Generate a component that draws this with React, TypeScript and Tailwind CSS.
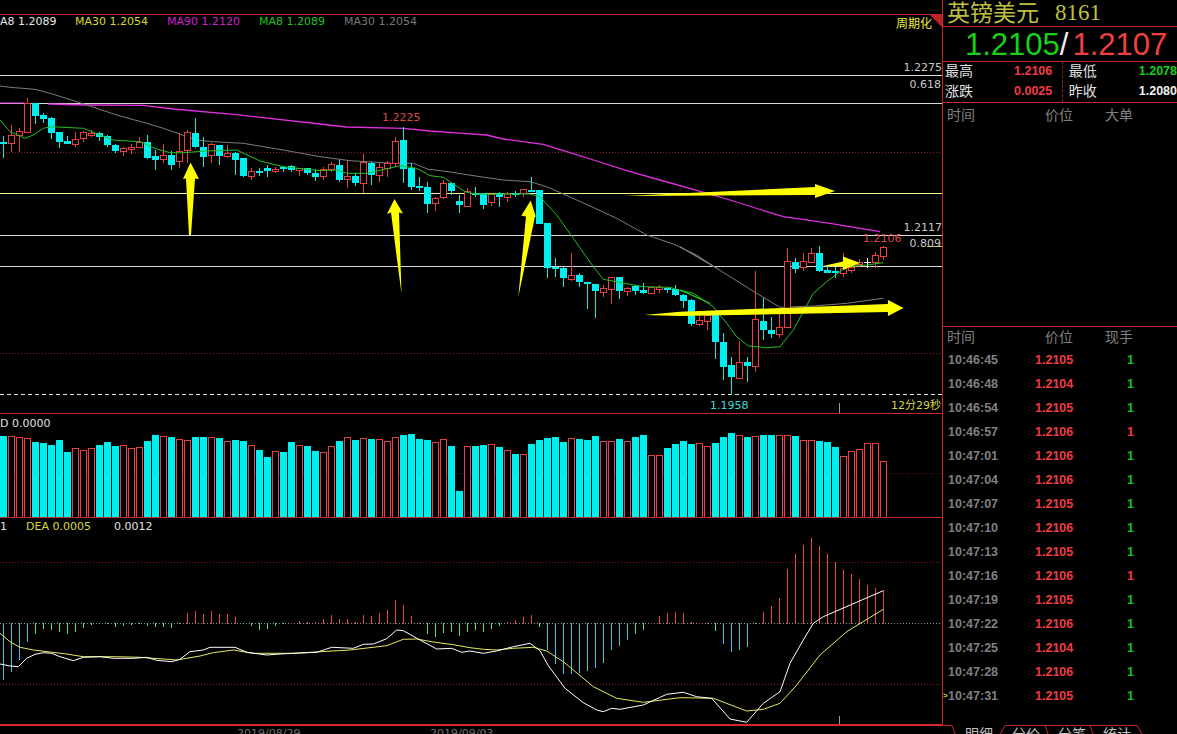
import React from "react";

const CYAN = "#00f0f0";
const RED = "#e8403c";
const LINE = "#c02830";
const WIDTH = 942;

// [wick top, body top, body bottom, wick bottom, colour], y values are 3x page pixels
type Candle = [number, number, number, number, "c" | "r" | "w"];
const candles: Candle[] = [
  [408, 425, 429, 475, "c"], [375, 406, 428, 455, "r"], [385, 392, 406, 455, "r"], [295, 310, 396, 400, "r"],
  [310, 310, 347, 372, "c"], [338, 346, 356, 368, "c"], [350, 354, 398, 418, "c"], [395, 396, 426, 443, "c"],
  [408, 423, 432, 432, "c"], [395, 418, 431, 440, "r"], [392, 397, 413, 425, "r"], [390, 400, 403, 412, "r"],
  [395, 400, 410, 422, "c"], [405, 408, 435, 440, "c"], [432, 435, 453, 458, "c"], [442, 443, 452, 467, "r"],
  [432, 440, 446, 462, "r"], [412, 426, 440, 445, "r"], [405, 426, 473, 478, "c"], [450, 469, 480, 510, "c"],
  [432, 465, 477, 490, "r"], [452, 466, 495, 510, "c"], [398, 452, 482, 503, "r"], [390, 397, 450, 488, "r"],
  [355, 399, 440, 443, "c"], [412, 441, 470, 500, "c"], [430, 433, 466, 490, "r"], [435, 436, 467, 495, "c"],
  [435, 460, 467, 473, "r"], [455, 460, 479, 525, "c"], [473, 474, 527, 530, "c"], [505, 514, 527, 540, "r"],
  [505, 513, 518, 527, "c"], [495, 504, 513, 530, "c"], [500, 506, 512, 520, "r"], [497, 502, 508, 515, "c"],
  [495, 498, 511, 515, "c"], [503, 505, 510, 527, "r"], [503, 505, 520, 525, "c"], [508, 520, 530, 542, "c"],
  [500, 508, 529, 540, "r"], [485, 493, 507, 515, "r"], [480, 496, 540, 545, "c"], [482, 527, 538, 563, "r"],
  [518, 528, 550, 558, "c"], [462, 485, 548, 578, "r"], [485, 489, 526, 556, "c"], [488, 501, 526, 545, "r"],
  [483, 489, 505, 530, "r"], [410, 424, 490, 500, "r"], [380, 421, 506, 548, "c"], [488, 505, 560, 570, "c"],
  [530, 558, 565, 572, "c"], [545, 562, 611, 640, "c"], [590, 595, 608, 632, "r"], [540, 548, 592, 597, "r"],
  [548, 550, 572, 585, "c"], [585, 603, 615, 640, "c"], [565, 573, 618, 622, "r"], [562, 578, 582, 590, "c"],
  [578, 580, 615, 627, "c"], [578, 582, 607, 618, "r"], [575, 578, 590, 620, "c"], [575, 578, 592, 605, "r"],
  [572, 578, 582, 592, "c"], [568, 568, 580, 590, "r"], [532, 570, 575, 575, "c"], [570, 570, 672, 673, "c"],
  [670, 670, 805, 833, "c"], [775, 800, 807, 830, "c"], [800, 805, 835, 860, "c"], [758, 826, 836, 842, "r"],
  [820, 825, 845, 860, "c"], [845, 846, 851, 927, "c"], [853, 853, 872, 955, "c"], [855, 865, 875, 890, "r"],
  [830, 830, 866, 912, "r"], [832, 832, 872, 898, "c"], [860, 863, 872, 888, "r"], [855, 857, 872, 885, "c"],
  [848, 870, 878, 882, "c"], [860, 861, 878, 878, "r"], [855, 860, 862, 880, "r"], [860, 863, 868, 880, "c"],
  [855, 866, 885, 888, "c"], [883, 884, 902, 925, "c"], [898, 900, 972, 978, "c"], [948, 960, 972, 978, "r"],
  [940, 945, 962, 990, "r"], [940, 940, 1025, 1077, "c"], [1000, 1027, 1100, 1140, "c"], [1070, 1095, 1130, 1185, "c"],
  [1023, 1085, 1133, 1137, "r"], [1070, 1087, 1097, 1147, "c"], [813, 958, 1097, 1115, "r"], [895, 963, 990, 1020, "c"],
  [950, 990, 1002, 1015, "c"], [940, 980, 1003, 1015, "r"], [745, 782, 982, 983, "r"], [773, 787, 807, 820, "c"],
  [760, 782, 802, 813, "r"], [745, 760, 785, 785, "r"], [738, 760, 813, 815, "c"], [795, 810, 818, 820, "c"],
  [800, 813, 818, 835, "c"], [758, 805, 820, 830, "r"], [795, 800, 810, 820, "r"], [778, 785, 788, 800, "r"],
  [775, 787, 788, 805, "w"], [755, 766, 786, 805, "r"], [738, 740, 767, 780, "r"],
];

// volume bar tops, 3x pixels below y=410
const volTops = [
  78, 78, 82, 85, 96, 99, 105, 90, 126, 115, 120, 115, 105, 96, 108, 105, 115, 111, 93, 75, 78, 82, 87, 90, 82, 82, 82, 85,
  93, 90, 93, 105, 120, 141, 123, 126, 96, 105, 108, 123, 126, 108, 93, 82, 90, 85, 87, 87, 93, 82, 75, 72, 87, 90, 96, 87,
  108, 243, 108, 108, 105, 102, 111, 120, 132, 132, 102, 90, 84, 81, 96, 85, 87, 90, 78, 93, 93, 87, 93, 81, 75, 135, 135,
  114, 102, 93, 102, 99, 108, 99, 81, 69, 75, 81, 78, 75, 75, 75, 75, 78, 90, 90, 93, 96, 111, 138, 123, 117, 99, 99, 153,
];
const redVol = new Set([
  1, 2, 3, 9, 10, 11, 15, 16, 17, 20, 22, 23, 26, 28, 31, 34, 37, 40, 41, 43, 45, 47, 48, 49, 54, 55, 58, 61, 63, 65, 71, 75,
  76, 78, 81, 82, 87, 88, 92, 94, 97, 98, 100, 101, 105, 106, 107, 108, 109, 110,
]);

// MACD histogram, 3x pixels above (+) or below (-) the zero line
const macdBars = [
  -170, -145, -110, -55, -30, -15, -18, -25, -32, -25, -13, -3, -1, -1, -10, -8, -5, -2, -6, -10, -10, -14, -2, 30, 35, 28, 35,
  28, 28, 18, -2, -8, -18, -15, -6, -1, 1, 5, 3, 3, 12, 24, 12, 12, 2, 24, 22, 30, 40, 68, 55, 22, 1, -30, -40, -28, -26, -36,
  -25, -20, -25, -15, -8, 2, 8, 18, 24, -10, -80, -120, -150, -150, -148, -142, -134, -118, -80, -68, -48, -32, -18, 1, 20, 30,
  34, 30, 3, 1, 1, -22, -60, -85, -78, -70, -1, 32, 52, 75, 162, 208, 235, 255, 232, 208, 184, 160, 148, 132, 115, 105, 100,
];

type Pts = number[][];
// reads points from 3x crops back to page pixels
const crop = (ox: number, oy: number, pts: Pts): Pts => pts.map(([x, y]) => [ox + x / 3, oy + y / 3]);
const toPath = (pts: Pts) => pts.map(([x, y]) => `${x.toFixed(1)},${y.toFixed(1)}`).join(" ");

const ma90 = [
  ...crop(0, 0, [[145, 312], [260, 315], [430, 316], [520, 327], [700, 343], [960, 372], [1040, 381], [1210, 385], [1290, 393]]),
  ...crop(430, 100, [[0, 93], [100, 100], [170, 105], [220, 117], [340, 133], [410, 155], [500, 183], [590, 212], [700, 243], [790, 268], [900, 300]]),
  ...crop(680, 210, [[245, 0], [310, 20], [450, 40], [600, 65]]),
];
const ma30 = [
  ...crop(0, 0, [[0, 258], [30, 262], [105, 268], [150, 280], [215, 300], [275, 320], [350, 345], [440, 370], [490, 385], [590, 420], [640, 425], [730, 430], [850, 450], [960, 470], [1050, 482], [1180, 490], [1240, 490], [1290, 510]]),
  ...crop(430, 100, [[0, 208], [60, 216], [150, 230], [220, 240], [300, 245], [350, 260], [400, 282], [480, 318], [560, 355], [650, 405], [730, 432], [800, 465], [860, 505]]),
  ...crop(680, 210, [[0, 110], [110, 175], [230, 250], [300, 292], [400, 288], [500, 280], [610, 265]]),
];
const ma8 = [
  ...crop(0, 0, [[0, 360], [30, 395], [75, 415], [100, 405], [130, 385], [155, 380], [250, 385], [300, 405], [340, 420], [420, 425], [470, 447], [510, 458], [550, 458], [620, 453], [710, 450], [780, 483], [850, 500], [960, 512], [1010, 510], [1040, 520], [1100, 520], [1200, 497], [1250, 505], [1290, 527]]),
  ...crop(430, 100, [[0, 227], [40, 232], [75, 255], [105, 275], [135, 282], [300, 282], [330, 290], [380, 345], [430, 415], [490, 500], [520, 538], [640, 560], [720, 562], [770, 578], [840, 610]]),
  ...crop(680, 210, [[0, 240], [40, 250], [100, 290], [140, 340], [170, 380], [205, 408], [260, 413], [300, 410], [340, 360], [400, 250], [440, 215], [500, 170], [560, 165], [610, 158]]),
];
const dif = [
  ...crop(0, 520, [[0, 432], [30, 438], [55, 440], [80, 415], [105, 403], [130, 398], [155, 400], [180, 410], [220, 422], [250, 412], [300, 410], [340, 415], [400, 415], [440, 412], [470, 421], [515, 425], [540, 418], [570, 395], [610, 390], [630, 382], [705, 382], [740, 397], [800, 405], [840, 402], [880, 400], [950, 397], [995, 382], [1060, 385], [1090, 373], [1120, 372], [1160, 356], [1190, 330], [1210, 332], [1260, 360], [1310, 387], [1355, 385], [1385, 397]]),
  ...crop(470, 520, [[0, 393], [40, 400], [80, 393], [130, 380], [180, 370], [210, 392], [235, 437], [285, 505], [340, 548], [380, 570], [400, 575], [425, 565], [450, 568], [520, 555], [590, 523], [640, 517], [680, 530], [725, 535], [780, 597], [830, 607], [880, 550], [930, 515], [960, 430], [1000, 360], [1030, 310], [1060, 290], [1240, 212]]),
];
const dea = [
  ...crop(0, 520, [[0, 340], [30, 365], [60, 382], [100, 390], [200, 402], [250, 410], [350, 410], [420, 412], [530, 420], [600, 408], [640, 398], [700, 390], [760, 400], [880, 400], [1050, 390], [1160, 377], [1210, 358], [1250, 357], [1300, 366], [1360, 374]]),
  ...crop(470, 520, [[0, 383], [40, 388], [80, 390], [130, 385], [190, 382], [230, 393], [280, 425], [370, 500], [440, 535], [520, 547], [630, 533], [730, 535], [830, 573], [880, 568], [930, 550], [980, 495], [1050, 405], [1130, 335], [1240, 268]]),
];

const arrows = [
  "190.5,162.5 199,179 195,178.5 191,235 189,235 186,178.5 183,179",
  "394.5,199 403,213.5 399,212.5 401.5,294 391,212.5 387,214",
  "530.7,200.5 536,217 535,216.5 518.3,297 526,216.5 521.3,215.7",
  "624,196 815,187 815,184 835,191 815,198 815,195",
  "644,315 680,311.7 888,304 888,300 903.5,308 888,316 888,312 680,316",
  "823,266 843,261.5 843,256.5 860,263 843,270 843,266.5",
];

const trades = [
  ["10:46:45", "1.2105", "g"], ["10:46:48", "1.2104", "g"], ["10:46:54", "1.2105", "g"], ["10:46:57", "1.2106", "r"],
  ["10:47:01", "1.2106", "g"], ["10:47:04", "1.2106", "g"], ["10:47:07", "1.2105", "g"], ["10:47:10", "1.2106", "g"],
  ["10:47:13", "1.2105", "g"], ["10:47:16", "1.2106", "r"], ["10:47:19", "1.2105", "g"], ["10:47:22", "1.2106", "g"],
  ["10:47:25", "1.2104", "g"], ["10:47:28", "1.2106", "g"], ["10:47:31", "1.2105", "g"],
];

const CandleMark = ({ c, i }: { c: Candle; i: number }) => {
  const [wt, bt, bb, wb, kind] = c;
  const x = 8 * i;
  const top = Math.round(bt / 3);
  const bottom = Math.max(Math.round(bb / 3), top + 2);
  const color = kind === "c" ? CYAN : kind === "r" ? RED : "#ffffff";
  return (
    <g shapeRendering="crispEdges">
      <rect x={x + 3} y={wt / 3} width={1} height={(wb - wt) / 3} fill={color} />
      {kind === "c" && <rect x={x} y={top} width={7} height={bottom - top} fill={CYAN} />}
      {kind === "r" && (
        <>
          <rect x={x} y={top} width={7} height={bottom - top + 1} fill={RED} />
          <rect x={x + 1} y={top + 1} width={5} height={bottom - top - 1} fill="#000" />
        </>
      )}
      {kind === "w" && <rect x={x} y={top} width={7} height={1} fill="#fff" />}
    </g>
  );
};

const HLine = ({ y, color = "#d8d8d8" }: { y: number; color?: string }) => (
  <line x1={0} x2={WIDTH} y1={y + 0.5} y2={y + 0.5} stroke={color} shapeRendering="crispEdges" />
);

const Dotted = ({ y, color = "#8a1c1c" }: { y: number; color?: string }) => (
  <line x1={0} x2={WIDTH} y1={y + 0.5} y2={y + 0.5} stroke={color} strokeDasharray="1 2" shapeRendering="crispEdges" />
);

const Label = ({ x, y, fill, children, end }: { x: number; y: number; fill: string; children: React.ReactNode; end?: boolean }) => (
  <text x={x} y={y} fill={fill} textAnchor={end ? "end" : "start"} className="text-[11px]">
    {children}
  </text>
);

const MainChart = () => (
  <div className="relative h-[399px] border-t border-[#c02830]">
    <svg viewBox="0 15 942 398" className="block h-[398px] w-[942px]">
      <HLine y={75} />
      <HLine y={103} />
      <Dotted y={152} />
      <HLine y={193} color="#f4f490" />
      <HLine y={235} />
      <HLine y={266} />
      <Dotted y={353} />
      <line x1={0} x2={WIDTH} y1={394.5} y2={394.5} stroke="#e8e8e8" strokeDasharray="4 3" shapeRendering="crispEdges" />
      <rect x={839} y={403} width={1} height={10} fill="#999" />
      <line x1={0} x2={25} y1={103} y2={103} stroke="#e030e0" />
      <polyline points={toPath(ma90)} fill="none" stroke="#e030e0" strokeWidth={1.3} />
      <polyline points={toPath(ma30)} fill="none" stroke="#7c7c7c" />
      {candles.map((c, i) => (
        <CandleMark key={i} c={c} i={i} />
      ))}
      <polyline points={toPath(ma8)} fill="none" stroke="#22c022" />
      {arrows.map((a) => (
        <polygon key={a} points={a} fill="#ffff00" />
      ))}
      <line x1={927} x2={942} y1={246.5} y2={246.5} stroke="#c8c830" />
      <Label x={942} y={71} fill="#c8c8c8" end>1.2275</Label>
      <Label x={941} y={88} fill="#c8c8c8" end>0.618</Label>
      <Label x={382} y={121} fill="#d84848">1.2225</Label>
      <Label x={942} y={231} fill="#c8c8c8" end>1.2117</Label>
      <Label x={941} y={247} fill="#c8c8c8" end>0.809</Label>
      <Label x={863} y={242} fill="#d84848">1.2106</Label>
      <Label x={710} y={409} fill="#40d8d8">1.1958</Label>
      <Label x={941} y={409} fill="#d8d840" end>12分29秒</Label>
      <polygon points="930,15 942,15 942,27" fill="#c02028" />
    </svg>
    <div className="absolute left-0 top-0 flex h-[15px] w-full items-center text-[11px]">
      <span className="w-[75px] text-[#e8e8e8]">A8 1.2089</span>
      <span className="w-[92px] text-[#d8d830]">MA30 1.2054</span>
      <span className="w-[92px] text-[#d020d0]">MA90 1.2120</span>
      <span className="w-[85px] text-[#20c020]">MA8 1.2089</span>
      <span className="text-[#777777]">MA30 1.2054</span>
    </div>
    <span className="absolute right-[10px] top-[2px] text-[12px] leading-[15px] text-[#e8e840]">周期化</span>
  </div>
);

const VolumeChart = () => (
  <div className="relative h-[104px] border-t border-[#c02830]">
    <svg viewBox="0 414 942 103" className="block h-[103px] w-[942px]" shapeRendering="crispEdges">
      <Dotted y={473} color="#5c1414" />
      {volTops.map((z, i) => {
        const top = Math.round(410 + z / 3);
        return redVol.has(i) ? (
          <g key={i}>
            <rect x={8 * i} y={top} width={7} height={517 - top} fill={RED} />
            <rect x={8 * i + 1} y={top + 1} width={5} height={517 - top} fill="#000" />
          </g>
        ) : (
          <rect key={i} x={8 * i} y={top} width={7} height={517 - top} fill={CYAN} />
        );
      })}
    </svg>
    <span className="absolute left-0 top-[2px] text-[11px] leading-[15px] text-[#e0e0e0]">D 0.0000</span>
  </div>
);

const MacdChart = () => (
  <div className="relative h-[208px] border-y border-t-[#c02830] border-b-[#d82828]">
    <svg viewBox="0 518 942 206" className="block h-[206px] w-[942px]">
      <Dotted y={562} />
      <Dotted y={684} />
      <Dotted y={623} color="#909090" />
      {macdBars.map((v, i) => (
        <rect
          key={i}
          x={8 * i + 3}
          y={v > 0 ? 623 - v / 3 : 623}
          width={1}
          height={Math.abs(v) / 3 + 0.5}
          fill={v > 0 ? "#e8484c" : v < -40 ? "#40c0f0" : "#40e0b0"}
          shapeRendering="crispEdges"
        />
      ))}
      <rect x={839} y={716} width={1} height={9} fill="#999" />
      <polyline points={toPath(dea)} fill="none" stroke="#e8e860" />
      <polyline points={toPath(dif)} fill="none" stroke="#ffffff" />
    </svg>
    <div className="absolute left-0 top-[1px] flex items-center text-[11px] leading-[15px]">
      <span className="w-[26px] text-[#e0e0e0]">1</span>
      <span className="w-[88px] text-[#d8d840]">DEA 0.0005</span>
      <span className="text-[#e0e0e0]">0.0012</span>
    </div>
  </div>
);

const DateAxis = () => (
  <div className="flex h-[9px] overflow-hidden border-t border-[#d82828] pl-[237px] text-[11px] leading-[15px] text-[#707070]">
    <span className="w-[193px] shrink-0">2019/08/29</span>
    <span>2019/09/03</span>
  </div>
);

const SideHeader = ({ last, rowHeight }: { last: string; rowHeight: string }) => (
  <div className={`flex ${rowHeight} shrink-0 items-center pl-[4px] text-[14px] text-[#808080]`}>
    <span className="w-[98px]">时间</span>
    <span className="w-[60px]">价位</span>
    <span>{last}</span>
  </div>
);

const StatCell = ({ label, value, color, gap }: { label: string; value: string; color: string; gap: string }) => (
  <div className="flex h-[20px] items-center whitespace-nowrap">
    <span className="shrink-0 text-[14px] text-[#e0e0e0]">{label}</span>
    <span className={`${gap} shrink-0 text-[12.5px] font-bold ${color}`}>{value}</span>
  </div>
);

const Tabs = () => (
  <div className="relative flex h-[9px] overflow-hidden pl-[23px] text-[14px] leading-[18px] text-[#c0c0c0]">
    <svg viewBox="942 725 235 9" className="absolute left-0 top-0 h-[9px] w-[235px]">
      <polyline points="942,725.5 952,725.5 955,734" fill="none" stroke={LINE} />
      <polyline points="1000,734 1005,725.5 1045,725.5 1048,734" fill="none" stroke={LINE} />
      <polyline points="1045,725.5 1090,725.5 1093,734" fill="none" stroke={LINE} />
      <polyline points="1090,725.5 1137,725.5 1142,734" fill="none" stroke={LINE} />
    </svg>
    <span className="w-[47px]">明细</span>
    <span className="w-[46px]">分价</span>
    <span className="w-[45px]">分笔</span>
    <span>统计</span>
  </div>
);

const SidePanel = () => (
  <div className="flex w-[235px] shrink-0 flex-col font-['Liberation_Sans','Noto_Sans_CJK_SC',sans-serif]">
    <div className="flex h-[725px] flex-col border-l border-[#c02830]">
      <div className="flex h-[27px] shrink-0 items-center gap-[16px] border-b border-[#c02830] pl-[4px] text-[#c0c040]">
        <span className="text-[23px] leading-[26px]">英镑美元</span>
        <span className="font-['Liberation_Serif',serif] text-[23px] leading-[26px]">8161</span>
      </div>
      <div className="flex h-[35px] shrink-0 items-center border-b border-[#c02830] pl-[22px] text-[31px] leading-none">
        <span className="text-[#18d018]">1.2105</span>
        <span className="mr-[4px] text-[#f0f0f0]">/</span>
        <span className="text-[#f04040]">1.2107</span>
      </div>
      <div className="flex h-[41px] shrink-0 border-b border-[#c02830]">
        <div className="-mt-[1px] h-[41px] w-[120px] border-r border-dashed border-[#a02028] pl-[2px]">
          <StatCell label="最高" value="1.2106" color="text-[#f03c44]" gap="ml-[41px]" />
          <StatCell label="涨跌" value="0.0025" color="text-[#f03c44]" gap="ml-[41px]" />
        </div>
        <div className="-mt-[1px] pl-[6px]">
          <StatCell label="最低" value="1.2078" color="text-[#18d018]" gap="ml-[42px]" />
          <StatCell label="昨收" value="1.2080" color="text-[#f0f0f0]" gap="ml-[42px]" />
        </div>
      </div>
      <div className="h-[224px] shrink-0 border-b border-[#c02830]">
        <SideHeader last="大单" rowHeight="h-[25px]" />
      </div>
      <SideHeader last="现手" rowHeight="h-[21px]" />
      <div className="text-[12.5px] font-bold">
        {trades.map(([time, price, side], i) => (
          <div key={time} className="relative flex h-[24px] items-center pl-[5px]">
            {i === trades.length - 1 && <span className="absolute left-0 text-[8px] text-[#d8d840]">&gt;</span>}
            <span className="w-[87px] text-[#808080]">{time}</span>
            <span className="w-[92px] text-[#f03c44]">{price}</span>
            <span className={side === "g" ? "text-[#18c028]" : "text-[#f03c44]"}>1</span>
          </div>
        ))}
      </div>
    </div>
    <Tabs />
  </div>
);

export default function App() {
  return (
    <div className="flex h-[734px] w-[1177px] overflow-hidden bg-black font-['DejaVu_Sans','Noto_Sans_CJK_SC',sans-serif]">
      <div className="flex w-[942px] shrink-0 flex-col">
        <div className="h-[14px]" />
        <MainChart />
        <VolumeChart />
        <MacdChart />
        <DateAxis />
      </div>
      <SidePanel />
    </div>
  );
}
